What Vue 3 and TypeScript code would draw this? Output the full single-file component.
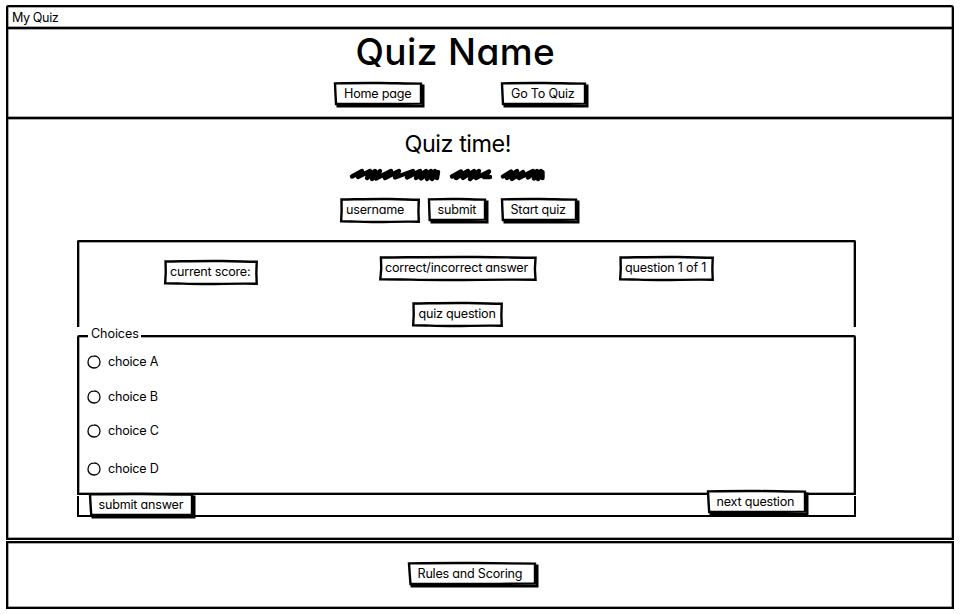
<script setup lang="ts">
import { ref } from 'vue'

interface Choice {
  id: string
  label: string
}

const choices: Choice[] = [
  { id: 'a', label: 'choice A' },
  { id: 'b', label: 'choice B' },
  { id: 'c', label: 'choice C' },
  { id: 'd', label: 'choice D' },
]
const picked = ref<string | null>(null)

// Hand-drawn outlines, stretched to the size of the element they decorate.
const buttonOutline = 'M0 2 C20 0 34 -1 52 0 S86 3 100 3 L100 52 L100 98 C75 98 60 101 42 100 S14 101 1.2 100 L0.6 55 Z'
const boxOutline = 'M0.6 2 C22 1 42 -1 62 0 S88 3 99.7 3 L99.3 52 L99.7 99 C76 97 58 101 40 100 S12 97 0.2 97 L0.8 50 Z'
</script>

<template>
  <div class="window">
    <div class="titlebar"><span class="t-app">My Quiz</span></div>

    <header class="header">
      <h1>Quiz Name</h1>
      <nav class="nav">
        <button class="sketch btn home">
          <svg viewBox="0 0 100 100" preserveAspectRatio="none"><path :d="buttonOutline" /></svg>
          <span>Home page</span>
        </button>
        <button class="sketch btn go">
          <svg viewBox="0 0 100 100" preserveAspectRatio="none"><path :d="buttonOutline" /></svg>
          <span>Go To Quiz</span>
        </button>
      </nav>
    </header>

    <main class="main">
      <h2>Quiz time!</h2>
      <svg class="scribble" width="200" height="16" viewBox="0 0 200 16">
        <path d="M3 10.5 L13 5 L9 11 L21 5 L18 12 L26 5 L23 13 L31 5 L27 12.5 L42 5 L36 12 L50 5 L46 11.5 L64 5 L58 11.5 L71 5 L67 12 L77 5 L72 12.5 L82 5 L78 13 L86 5 L83 13 L89 6 L88 12" />
        <path d="M103 10.5 L112 5.5 L107 12 L119 5 L114 12 L125 5 L121 13 L130 5 L127 12 L140 5.5 L135 11 L141 11" />
        <path d="M154 10.5 L162 5.5 L158 12 L168 5 L163 13 L174 6 L170 12 L184 5 L179 11.5 L188 5 L185 12.5 L192 5 L189 13 L193.5 6 L193.5 12" />
      </svg>
      <div class="entry">
        <div class="sketch box username">
          <svg viewBox="0 0 100 100" preserveAspectRatio="none"><path :d="boxOutline" /></svg>
          <span>username</span>
        </div>
        <button class="sketch btn submit">
          <svg viewBox="0 0 100 100" preserveAspectRatio="none"><path :d="buttonOutline" /></svg>
          <span>submit</span>
        </button>
        <button class="sketch btn start">
          <svg viewBox="0 0 100 100" preserveAspectRatio="none"><path :d="buttonOutline" /></svg>
          <span>Start quiz</span>
        </button>
      </div>

      <section class="status">
        <div class="status-row">
          <div class="sketch box score">
            <svg viewBox="0 0 100 100" preserveAspectRatio="none"><path :d="boxOutline" /></svg>
            <span>current score:</span>
          </div>
          <div class="sketch box result">
            <svg viewBox="0 0 100 100" preserveAspectRatio="none"><path :d="boxOutline" /></svg>
            <span>correct/incorrect answer</span>
          </div>
          <div class="sketch box progress">
            <svg viewBox="0 0 100 100" preserveAspectRatio="none"><path :d="boxOutline" /></svg>
            <span>question 1 of 1</span>
          </div>
        </div>
        <div class="sketch box prompt">
          <svg viewBox="0 0 100 100" preserveAspectRatio="none"><path :d="boxOutline" /></svg>
          <span>quiz question</span>
        </div>
      </section>

      <section class="choices">
        <div class="legend"><span>Choices</span></div>
        <div
          v-for="c in choices"
          :key="c.id"
          class="choice"
          :class="'choice-' + c.id"
          @click="picked = c.id"
        >
          <svg width="14" height="14" viewBox="0 0 14 14">
            <path d="M7 1 C10.5 0.9 13.1 3.5 13 7 C13 10.6 10.4 13 7 13 C3.4 13 0.9 10.5 1 7 C1 3.4 3.5 1 7 1 Z" />
            <circle v-if="picked === c.id" cx="7" cy="7" r="3" />
          </svg>
          <span>{{ c.label }}</span>
        </div>
      </section>

      <div class="actions">
        <button class="sketch btn answer">
          <svg viewBox="0 0 100 100" preserveAspectRatio="none"><path :d="buttonOutline" /></svg>
          <span>submit answer</span>
        </button>
        <button class="sketch btn next">
          <svg viewBox="0 0 100 100" preserveAspectRatio="none"><path :d="buttonOutline" /></svg>
          <span>next question</span>
        </button>
      </div>
    </main>

    <footer class="footer">
      <button class="sketch btn rules">
        <svg viewBox="0 0 100 100" preserveAspectRatio="none"><path :d="buttonOutline" /></svg>
        <span>Rules and Scoring</span>
      </button>
    </footer>
  </div>
</template>

<style>
body {
  margin: 0;
  background: #fff;
}
</style>

<style scoped>
.window {
  box-sizing: border-box;
  width: 964px;
  height: 614px;
  padding: 5px 10px 5px 6px;
  overflow: hidden;
  color: #000;
  font-family: Inter, "Liberation Sans", sans-serif;
  font-feature-settings: "cv11" 1;
  font-size: 12.6px;
  font-weight: 400;
  letter-spacing: -0.22px;
  line-height: 16px;
}
.titlebar,
.header,
.main,
.footer {
  box-sizing: border-box;
  border: 2px solid #000;
  box-shadow: inset 0 0 0 0.5px #555;
  width: 948px;
}
.titlebar {
  height: 24px;
  padding: 3px 0 0 4px;
  border-radius: 2px 3px 0 0;
  letter-spacing: -0.4px;
}
.header {
  height: 90px;
  border-top: 0;
}
.main {
  height: 421px;
  border-top: 0;
}
.footer {
  height: 68px;
  margin-top: 1px;
  padding: 19px 0 0 399.5px;
}
h1 {
  margin: 0 0 0 347.5px;
  padding-top: 1px;
  height: 52px;
  font-size: 37px;
  line-height: 44px;
  font-weight: 500;
  letter-spacing: 0.4px;
  white-space: nowrap;
}
.nav {
  display: flex;
  gap: 79px;
  padding-left: 326px;
}
h2 {
  margin: 0 0 0 396.5px;
  padding-top: 10px;
  height: 38px;
  font-size: 23.4px;
  line-height: 30px;
  font-weight: 400;
  letter-spacing: -0.45px;
  white-space: nowrap;
}
.scribble {
  display: block;
  margin: -1.5px 0 1.5px 341px;
  fill: none;
  stroke: #000;
  stroke-width: 4.4;
  stroke-linecap: round;
  stroke-linejoin: round;
}
.entry {
  display: flex;
  padding: 15px 0 0 331.5px;
}
.sketch {
  position: relative;
  box-sizing: border-box;
  flex: none;
  border: 0;
  background: none;
  color: inherit;
  font: inherit;
  font-feature-settings: inherit;
  letter-spacing: inherit;
  white-space: nowrap;
  text-align: left;
}
.sketch svg {
  position: absolute;
  inset: 1px;
  width: calc(100% - 2px);
  height: calc(100% - 2px);
  overflow: visible;
}
.sketch svg path {
  fill: #fff;
  stroke: #000;
  stroke-width: 2.4;
  vector-effect: non-scaling-stroke;
}
.sketch span {
  position: relative;
}
.btn {
  height: 23px;
  padding: 4px 0 3px 10px;
  box-shadow: 2.5px 2.5px 0 #000;
}
.box {
  height: 25px;
  padding: 4px 0 5px 6.5px;
}
.home { width: 88px; }
.go { width: 85px; }
.username { width: 80px; margin-right: 8px; }
.submit { width: 58px; margin-right: 15px; }
.start { width: 76px; }

.status {
  box-sizing: border-box;
  width: 779px;
  height: 87px;
  margin: 17px 0 0 69px;
  border: 2px solid #000;
  box-shadow: inset 0.5px 0.5px 0 #555, inset -0.5px 0 0 #555;
  border-bottom: 0;
  border-radius: 2px 2px 0 0;
  padding: 14px 0 0 84.5px;
}
.status-row {
  display: flex;
  height: 45px;
}
.score { width: 94px; margin: 4px 121px 0 0; }
.result { width: 158px; margin-right: 82px; }
.progress { width: 95px; }
.prompt { width: 91px; margin-left: 248.5px; top: 0.5px; }

.choices {
  box-sizing: border-box;
  width: 779px;
  height: 160px;
  margin: 8px 0 0 69px;
  border: 2px solid #000;
  box-shadow: inset 0 0 0 0.5px #555;
  border-radius: 2px 2px 0 0;
  padding-left: 8px;
}
.legend {
  width: 50px;
  height: 16px;
  margin: -11px 0 9px 1px;
  background: #fff;
  padding-left: 3px;
  letter-spacing: -0.1px;
}
.choice {
  display: flex;
  align-items: center;
  gap: 7px;
  height: 16px;
}
.choice-a { margin-top: 12px; }
.choice-b { margin-top: 19px; }
.choice-c { margin-top: 18px; }
.choice-d { margin-top: 22px; }
.choice svg {
  flex: none;
  stroke: #000;
  stroke-width: 1.3;
  fill: none;
}
.choice svg circle {
  fill: #000;
}
.actions {
  box-sizing: border-box;
  display: flex;
  width: 779px;
  height: 21px;
  margin: 1px 0 0 69px;
  border: 2px solid #000;
  border-top: 0;
}
.answer { width: 104px; margin: -3.5px 0 0 9.5px; }
.next { width: 99px; margin: -6.5px 0 0 514px; }
.rules { width: 128px; }
</style>
